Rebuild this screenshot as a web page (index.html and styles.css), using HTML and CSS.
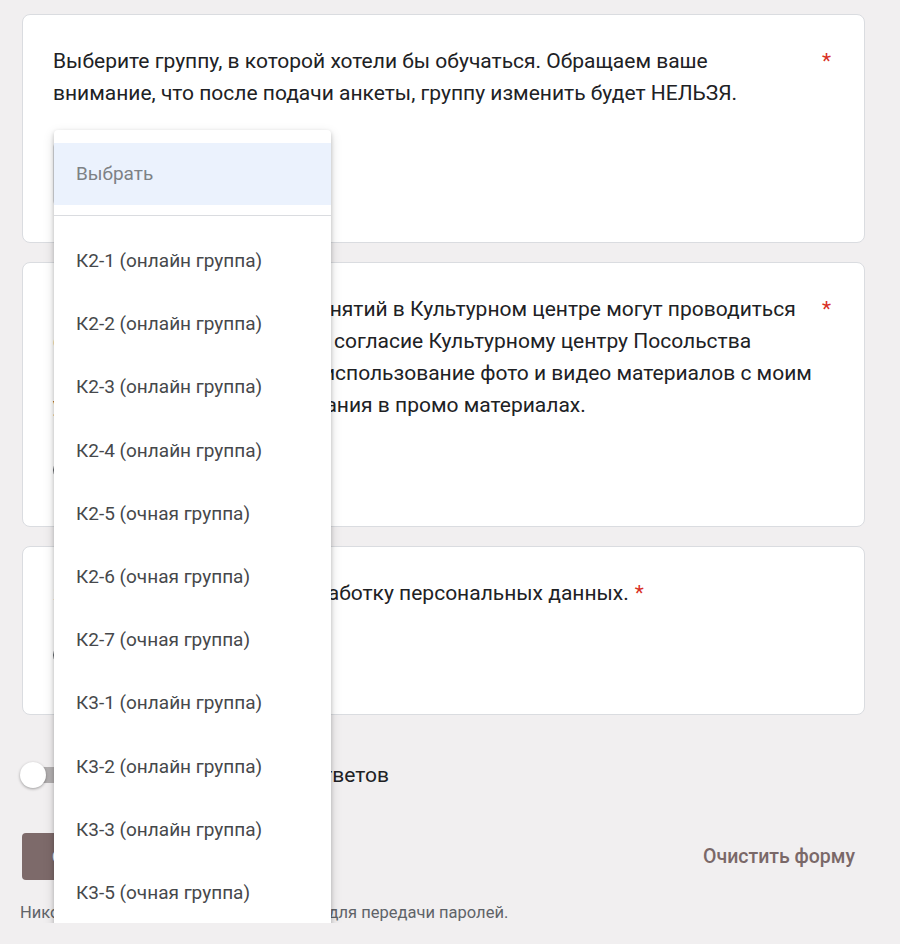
FILE: index.html
```html
<!DOCTYPE html>
<html lang="ru">
<head>
    <meta charset="UTF-8">
    <meta name="viewport" content="width=device-width, initial-scale=1.0">
    <title>Анкета</title>
    <link rel="stylesheet" href="styles.css">
</head>
<body>
    <div class="form">

        <!-- вопрос 1: выбор группы -->
        <div class="card card-group">
            <div class="title">
                <span class="title-text">Выберите группу, в которой хотели бы обучаться. Обращаем ваше<br>внимание, что после подачи анкеты, группу изменить будет НЕЛЬЗЯ.</span>
                <span class="required">*</span>
            </div>
            <div class="select">
                <div class="select-trigger">Выбрать</div>

                <div class="select-menu">
                    <div class="menu-item placeholder">Выбрать</div>
                    <div class="menu-sep"></div>
                    <div class="menu-item">К2-1 (онлайн группа)</div>
                    <div class="menu-item">К2-2 (онлайн группа)</div>
                    <div class="menu-item">К2-3 (онлайн группа)</div>
                    <div class="menu-item">К2-4 (онлайн группа)</div>
                    <div class="menu-item">К2-5 (очная группа)</div>
                    <div class="menu-item">К2-6 (очная группа)</div>
                    <div class="menu-item">К2-7 (очная группа)</div>
                    <div class="menu-item">К3-1 (онлайн группа)</div>
                    <div class="menu-item">К3-2 (онлайн группа)</div>
                    <div class="menu-item">К3-3 (онлайн группа)</div>
                    <div class="menu-item">К3-5 (очная группа)</div>
                </div>
            </div>
        </div>

        <!-- вопрос 2 -->
        <div class="card card-photo">
            <div class="title">
                <span class="title-text">В период организации их занятий в Культурном центре могут проводиться<br>фото и видеосъемки. Я даю согласие Культурному центру Посольства<br>Республики Узбекистан на использование фото и видео материалов с моим<br>участием для их использования в промо материалах.</span>
                <span class="required">*</span>
            </div>
            <label class="radio-row">
                <span class="radio"></span>
                <span class="radio-label">Да</span>
            </label>
        </div>

        <!-- вопрос 3 -->
        <div class="card card-data">
            <div class="title short">
                <span class="title-text">Я даю своё согласие на обработку персональных данных.</span>
                <span class="required">*</span>
            </div>
            <label class="radio-row">
                <span class="radio"></span>
                <span class="radio-label">Да</span>
            </label>
        </div>

        <div class="copy-row">
            <span class="toggle"><span class="toggle-track"></span><span class="toggle-thumb"></span></span>
            <span class="copy-text">Отправить мне копию ответов</span>
        </div>

        <div class="actions">
            <button class="submit-button">Отправить</button>
            <button class="clear-button">Очистить форму</button>
        </div>

        <div class="footer-note">Никогда не используйте формы Google для передачи паролей.</div>
    </div>
</body>
</html>
```

FILE: styles.css
```css
body {
    margin: 0;
    background-color: #f1eff0;
    font-family: Roboto, "Noto Sans", Arial, sans-serif;
    color: #202124;
}

.form {
    width: 843px;
    margin-left: 22px;
    padding-top: 14px;
}

.card {
    background-color: #fff;
    border: 1px solid #dadce0;
    border-radius: 8px;
    padding: 30px 30px 37px 30px;
    margin-bottom: 19px;
}

.card-photo {
    padding-bottom: 46px;
}

.card-data {
    padding-bottom: 49px;
}

.title {
    display: flex;
    font-size: 21px;
    line-height: 32px;
}

.title .title-text {
    flex: 1;
}

.title.short .title-text {
    flex: none;
}

.required {
    color: #d93025;
    margin-left: 6px;
    margin-right: 3px;
}

/* select + выпадающий список */
.select {
    position: relative;
    margin-top: 34px;
    width: 260px;
}

.select-trigger {
    height: 62px;
    line-height: 62px;
    border: 1px solid #dadce0;
    border-radius: 4px;
    padding-left: 22px;
    box-sizing: border-box;
    color: #5f6368;
    font-size: 19px;
}

.select-menu {
    position: absolute;
    top: -13px;
    left: 1px;
    width: 277px;
    background-color: #fff;
    border-radius: 4px;
    padding: 13px 0 10px 0;
    box-shadow: 0 2px 4px rgba(0, 0, 0, 0.2), 0 4px 12px rgba(0, 0, 0, 0.15);
    z-index: 10;
}

.menu-item {
    height: 63.2px;
    line-height: 63.2px;
    padding-left: 22px;
    font-size: 19px;
    color: #46484b;
    white-space: nowrap;
}

.menu-item.placeholder {
    height: 62px;
    line-height: 62px;
    background-color: #ebf2fd;
    color: #7d8185;
}

.menu-sep {
    border-top: 1px solid #dadce0;
    margin: 10px 0 13px 0;
}

/* радио */
.radio-row {
    display: flex;
    align-items: center;
    gap: 16px;
    height: 20px;
    margin-top: 39px;
    font-size: 19px;
    line-height: 20px;
}

.card-data .radio-row {
    margin-top: 36px;
}

.radio {
    width: 20px;
    height: 20px;
    border: 2px solid #5f6368;
    border-radius: 50%;
    box-sizing: border-box;
}

/* переключатель копии */
.copy-row {
    display: flex;
    align-items: center;
    margin-top: 48px;
    height: 24px;
    font-size: 21px;
}

.toggle {
    position: relative;
    width: 40px;
    height: 26px;
    margin-right: 24px;
}

.toggle-track {
    position: absolute;
    left: 6px;
    top: 5px;
    width: 34px;
    height: 16px;
    border-radius: 8px;
    background-color: #b3b0b1;
}

.toggle-thumb {
    position: absolute;
    left: -2px;
    top: 0;
    width: 26px;
    height: 26px;
    border-radius: 50%;
    background-color: #fff;
    box-shadow: 0 1px 3px rgba(0, 0, 0, 0.35);
}

.actions {
    display: flex;
    justify-content: space-between;
    align-items: center;
    margin-top: 46px;
    padding-right: 10px;
}

.submit-button {
    height: 47px;
    padding: 0 30px;
    border: none;
    border-radius: 4px;
    background-color: #7d6a6a;
    color: #fff;
    font-family: Roboto, sans-serif;
    font-size: 19px;
    font-weight: 500;
}

.clear-button {
    border: none;
    background: none;
    padding: 0;
    color: #7a6868;
    font-family: Roboto, sans-serif;
    font-size: 19.5px;
    font-weight: 500;
}

.footer-note {
    margin-top: 23px;
    margin-left: -2px;
    font-size: 16.5px;
    line-height: 20px;
    color: #5f6368;
}
```
